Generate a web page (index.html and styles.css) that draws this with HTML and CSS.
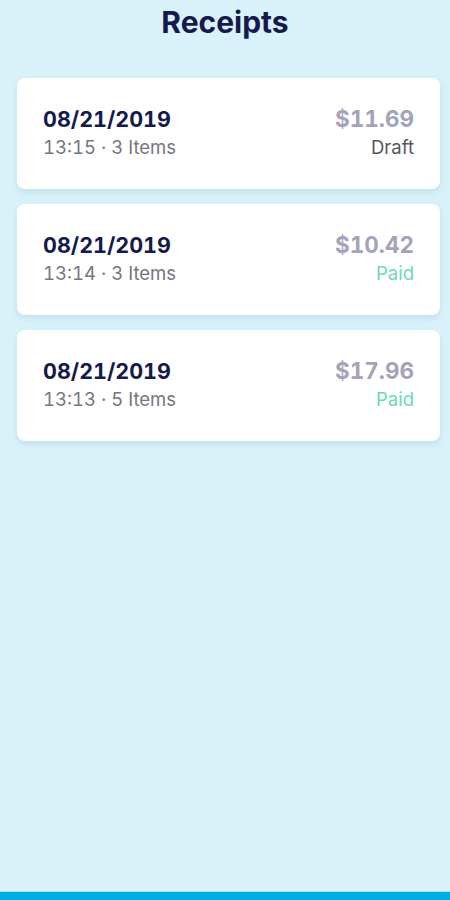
FILE: index.html
```html
<!DOCTYPE html>
<html lang="en">
<head>
    <meta charset="UTF-8">
    <meta name="viewport" content="width=device-width, initial-scale=1.0">
    <title>Receipts</title>
    <link rel="stylesheet" href="styles.css">
</head>
<body>
    <header class="top-bar">
        <h1>Receipts</h1>
    </header>
    <main>
        <ul class="receipt-list">
            <li class="receipt">
                <div class="receipt-left">
                    <div class="receipt-date">08/21/2019</div>
                    <div class="receipt-meta">13:15 · 3 Items</div>
                </div>
                <div class="receipt-right">
                    <div class="receipt-total">$11.69</div>
                    <div class="receipt-status draft">Draft</div>
                </div>
            </li>
            <li class="receipt">
                <div class="receipt-left">
                    <div class="receipt-date">08/21/2019</div>
                    <div class="receipt-meta">13:14 · 3 Items</div>
                </div>
                <div class="receipt-right">
                    <div class="receipt-total">$10.42</div>
                    <div class="receipt-status paid">Paid</div>
                </div>
            </li>
            <li class="receipt">
                <div class="receipt-left">
                    <div class="receipt-date">08/21/2019</div>
                    <div class="receipt-meta">13:13 · 5 Items</div>
                </div>
                <div class="receipt-right">
                    <div class="receipt-total">$17.96</div>
                    <div class="receipt-status paid">Paid</div>
                </div>
            </li>
        </ul>
    </main>
    <footer class="bottom-bar"></footer>
</body>
</html>
```

FILE: styles.css
```css
html, body {
    height: 100%;
}

body {
    font-family: Inter, 'Noto Sans', sans-serif;
    margin: 0;
    padding: 0;
    background-color: #d9f2fa;
    color: #333;
    display: flex;
    flex-direction: column;
    font-variant-numeric: tabular-nums;
}

.top-bar {
    text-align: center;
}

.top-bar h1 {
    margin: 0;
    padding-top: 3px;
    font-size: 30px;
    line-height: 38px;
    font-weight: 700;
    color: #141a4c;
}

main {
    flex-grow: 1;
    padding: 0 10px 0 17px;
}

.receipt-list {
    list-style-type: none;
    margin: 37px 0 0;
    padding: 0;
    display: flex;
    flex-direction: column;
    gap: 15px;
}

.receipt {
    background-color: white;
    height: 111px;
    box-sizing: border-box;
    padding: 0 26px 2px;
    border-radius: 8px;
    box-shadow: 0 3px 6px rgba(60, 120, 150, 0.15);
    display: flex;
    justify-content: space-between;
    align-items: center;
}

.receipt-right {
    text-align: right;
}

.receipt-date, .receipt-total {
    font-size: 21.5px;
    line-height: 30px;
    font-weight: 700;
}

.receipt-date {
    color: #141a4c;
}

.receipt-total {
    color: #a3a3bb;
    font-size: 22.5px;
}

.receipt-meta, .receipt-status {
    font-size: 18.5px;
    line-height: 27px;
}

.receipt-meta {
    color: #75767f;
}

.draft {
    color: #55565e;
}

.paid {
    color: #6ddcb0;
}

.bottom-bar {
    height: 8px;
    background-color: #00aee6;
    border-top: 1px solid #9ae4f6;
}
```
